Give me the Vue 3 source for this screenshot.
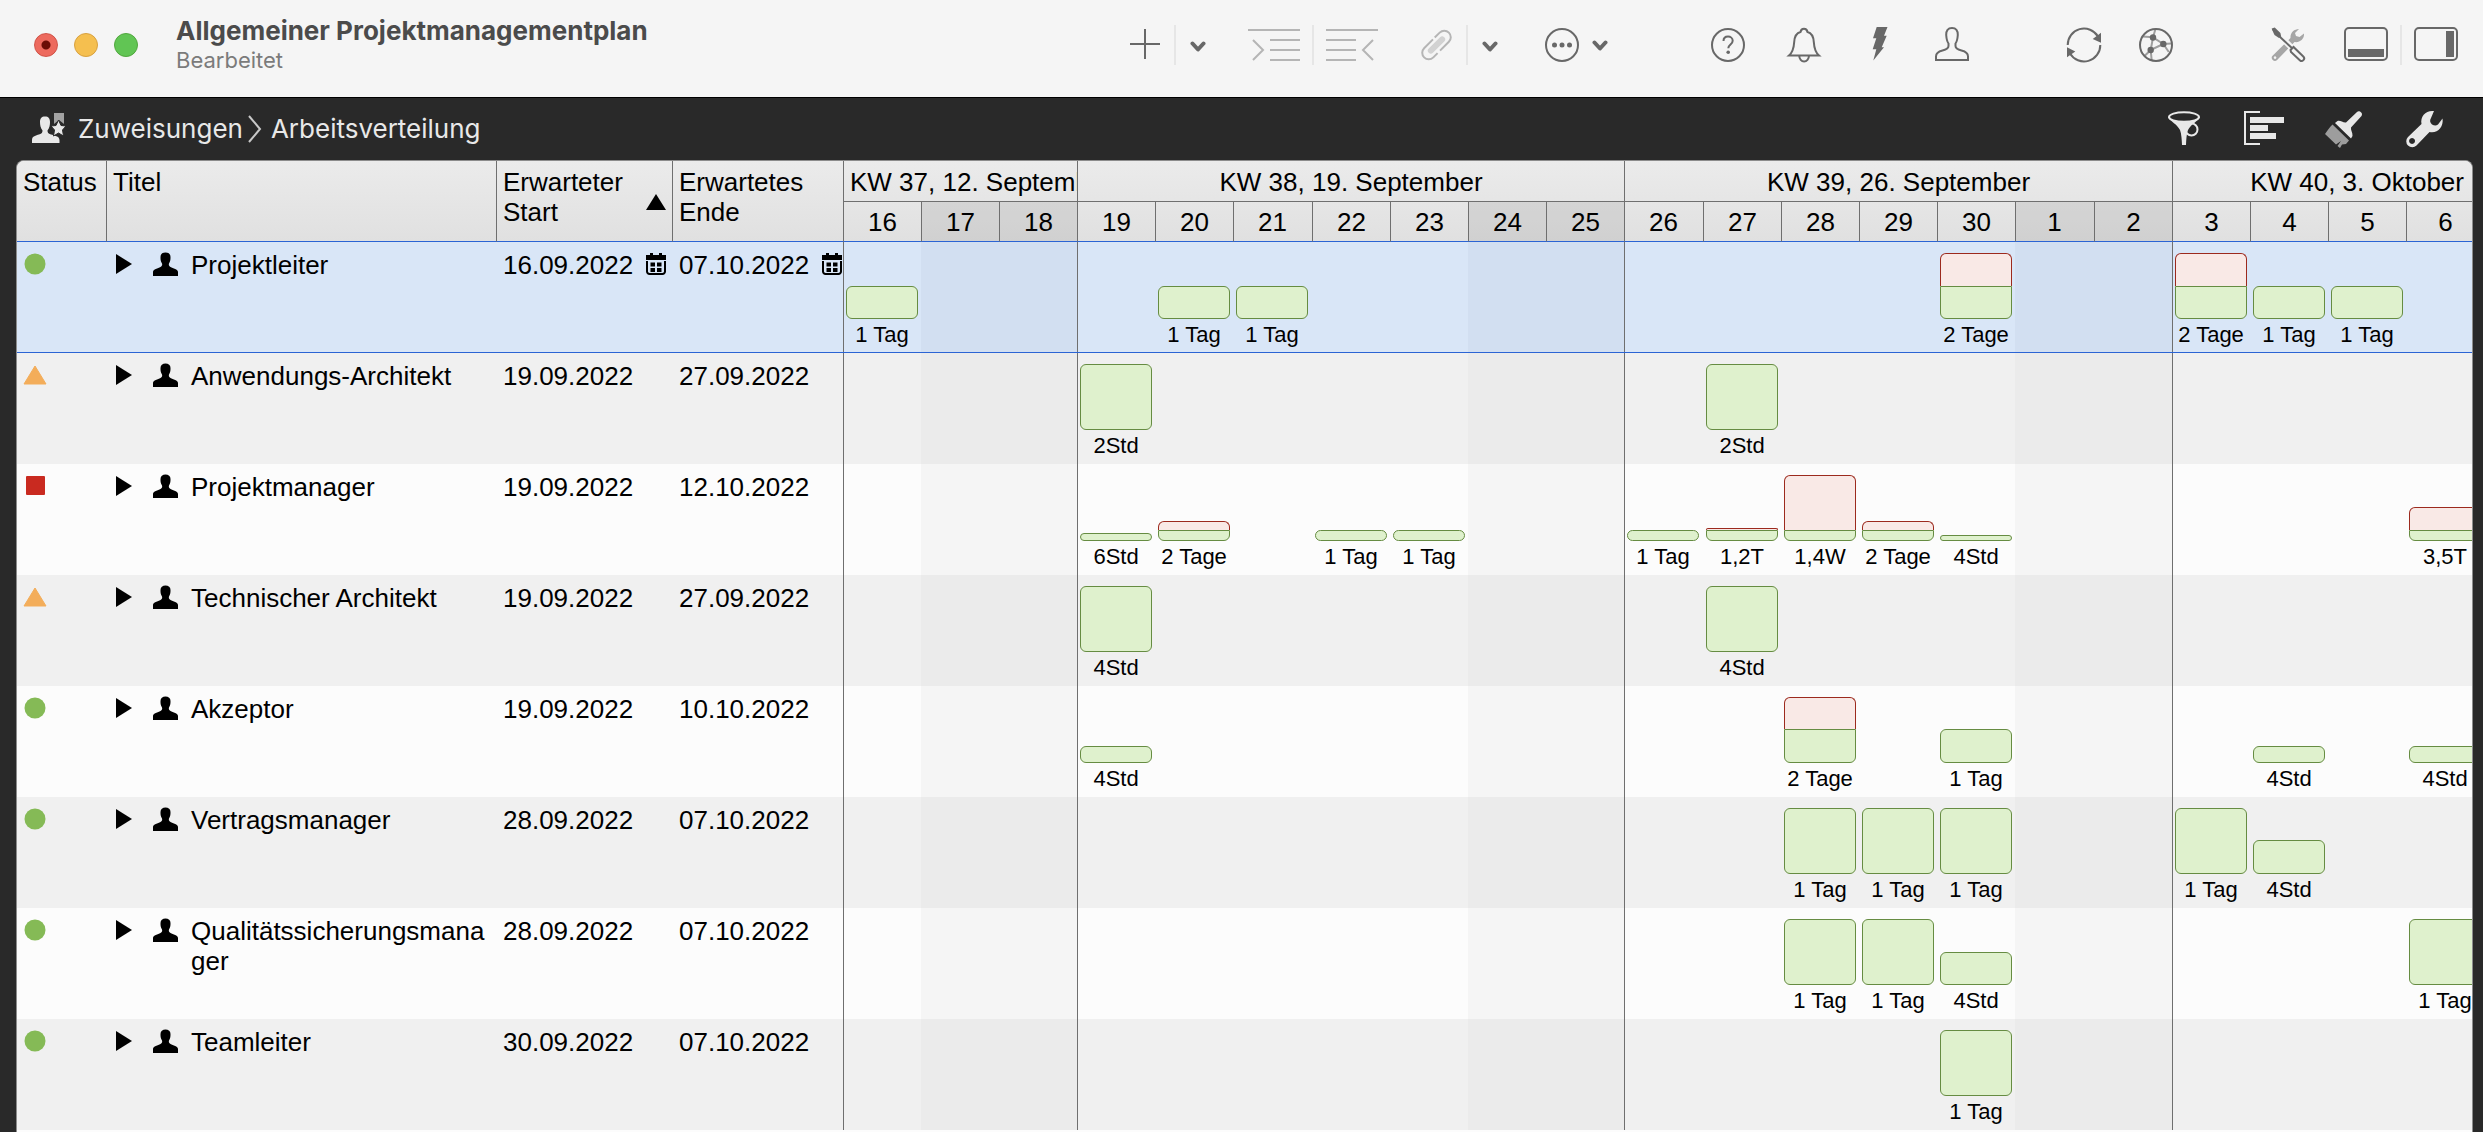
<script setup>
const days = [
  { n: 16, w: 78, week: true },
  { n: 17, w: 78, off: true },
  { n: 18, w: 78, off: true },
  { n: 19, w: 78, week: true },
  { n: 20, w: 78 },
  { n: 21, w: 79 },
  { n: 22, w: 78 },
  { n: 23, w: 78 },
  { n: 24, w: 78, off: true },
  { n: 25, w: 78, off: true },
  { n: 26, w: 79, week: true },
  { n: 27, w: 78 },
  { n: 28, w: 78 },
  { n: 29, w: 78 },
  { n: 30, w: 78 },
  { n: 1, w: 79, off: true },
  { n: 2, w: 78, off: true },
  { n: 3, w: 78, week: true },
  { n: 4, w: 78 },
  { n: 5, w: 78 },
  { n: 6 }
]

const weeks = [
  { label: 'KW 37, 12. September', span: 3, align: 'start' },
  { label: 'KW 38, 19. September', span: 7, align: 'middle' },
  { label: 'KW 39, 26. September', span: 7, align: 'middle' },
  { label: 'KW 40, 3. Oktober', span: 4, align: 'end' }
]

// Each load entry: label, height of the regular part, height of the overload part
const rows = [
  {
    title: 'Projektleiter', status: 'ok', start: '16.09.2022', end: '07.10.2022', fixed: true, selected: true,
    load: {
      16: ['1 Tag', 33], 20: ['1 Tag', 33], 21: ['1 Tag', 33], 30: ['2 Tage', 33, 33],
      3: ['2 Tage', 33, 33], 4: ['1 Tag', 33], 5: ['1 Tag', 33]
    }
  },
  {
    title: 'Anwendungs-Architekt', status: 'warn', start: '19.09.2022', end: '27.09.2022',
    load: { 19: ['2Std', 66], 27: ['2Std', 66] }
  },
  {
    title: 'Projektmanager', status: 'late', start: '19.09.2022', end: '12.10.2022',
    load: {
      19: ['6Std', 8], 20: ['2 Tage', 11, 9], 22: ['1 Tag', 11], 23: ['1 Tag', 11], 26: ['1 Tag', 11],
      27: ['1,2T', 11, 2], 28: ['1,4W', 11, 55], 29: ['2 Tage', 11, 9], 30: ['4Std', 6], 6: ['3,5T', 11, 23]
    }
  },
  {
    title: 'Technischer Architekt', status: 'warn', start: '19.09.2022', end: '27.09.2022',
    load: { 19: ['4Std', 66], 27: ['4Std', 66] }
  },
  {
    title: 'Akzeptor', status: 'ok', start: '19.09.2022', end: '10.10.2022',
    load: { 19: ['4Std', 17], 28: ['2 Tage', 34, 32], 30: ['1 Tag', 34], 4: ['4Std', 17], 6: ['4Std', 17] }
  },
  {
    title: 'Vertragsmanager', status: 'ok', start: '28.09.2022', end: '07.10.2022',
    load: { 28: ['1 Tag', 66], 29: ['1 Tag', 66], 30: ['1 Tag', 66], 3: ['1 Tag', 66], 4: ['4Std', 34] }
  },
  {
    title: 'Qualitätssicherungsmanager', status: 'ok', start: '28.09.2022', end: '07.10.2022',
    load: { 28: ['1 Tag', 66], 29: ['1 Tag', 66], 30: ['4Std', 33], 6: ['1 Tag', 66] }
  },
  {
    title: 'Teamleiter', status: 'ok', start: '30.09.2022', end: '07.10.2022',
    load: { 30: ['1 Tag', 66] }
  }
]
</script>

<template>
  <div class="window">
    <header class="toolbar">
      <div class="lights">
        <button class="light close" aria-label="Schließen"></button>
        <button class="light minimize" aria-label="Minimieren"></button>
        <button class="light maximize" aria-label="Maximieren"></button>
      </div>
      <div class="doc">
        <h1>Allgemeiner Projektmanagementplan</h1>
        <p>Bearbeitet</p>
      </div>

      <div class="group">
        <button class="tool" aria-label="Hinzufügen">
          <svg width="44" height="44"><path d="M7 21h30M22 6v30" class="ln" transform="translate(1 0)" /></svg>
        </button>
        <i class="sep"></i>
        <button class="chev after-sep" aria-label="Hinzufügen: Optionen">
          <svg width="16" height="44"><path d="M2.500 20.500l5.500 6 5.500-6" class="bold" /></svg>
        </button>
      </div>

      <div class="group g-indent">
        <button class="tool wide faint" aria-label="Einrücken">
          <svg width="52" height="44"><path d="M0 7h52M22 17h30M22 27h30M22 37h30M5 17l10 10L5 37" class="ln" /></svg>
        </button>
        <i class="sep mid"></i>
        <button class="tool wide faint" aria-label="Ausrücken">
          <svg width="52" height="44"><path d="M0 7h52M0 17h30M0 27h30M0 37h30M47 17L37 27l10 10" class="ln" /></svg>
        </button>
      </div>

      <div class="group g-link">
        <button class="tool faint" aria-label="Verknüpfen">
          <svg width="44" height="44">
            <g transform="rotate(45 22.500 22)" class="ln">
              <path d="M16 18V11a6.500 6.500 0 0 1 13 0v12.500M29 27v6a6.500 6.500 0 0 1-13 0V20.500" />
              <path d="M22.500 14v16" class="core" />
            </g>
          </svg>
        </button>
        <i class="sep"></i>
        <button class="chev after-sep" aria-label="Verknüpfen: Optionen">
          <svg width="16" height="44"><path d="M2.500 20.500l5.500 6 5.500-6" class="bold" /></svg>
        </button>
      </div>

      <div class="group g-more">
        <button class="tool" aria-label="Mehr">
          <svg width="44" height="44">
            <circle cx="22" cy="22" r="16" class="ln" />
            <g class="solid"><circle cx="14.500" cy="22" r="2.500" /><circle cx="22" cy="22" r="2.500" /><circle cx="29.500" cy="22" r="2.500" /></g>
          </svg>
        </button>
        <button class="chev after-tool" aria-label="Mehr: Optionen">
          <svg width="16" height="44"><path d="M2.500 19.500l5.500 6 5.500-6" class="bold" /></svg>
        </button>
      </div>

      <div class="group g-info">
        <button class="tool" aria-label="Hilfe">
          <svg width="44" height="44">
            <circle cx="22" cy="22" r="16" class="ln" />
            <path d="M17.500 18c0-3 2-4.500 4.500-4.500s4.700 1.600 4.700 4.300c0 3.700-4.400 3.700-4.400 7.400" class="ln" />
            <circle cx="22.200" cy="29.200" r="1.800" class="solid" />
          </svg>
        </button>
        <button class="tool" aria-label="Mitteilungen">
          <svg width="44" height="44">
            <path d="M7 32.500h30c-3.500-3-4.800-7-5.200-13.500C31.400 12.500 29.500 10 25.500 9c-.700-4.500-6.300-4.500-7 0-4 1-5.900 3.500-6.300 10-.400 6.500-1.700 10.500-5.200 13.500z" class="ln" />
            <path d="M17.300 33a4.800 5.500 0 0 0 9.600 0" class="ln" />
          </svg>
        </button>
        <button class="tool" aria-label="Aktionen">
          <svg width="44" height="44"><path d="M18.700 4h10.800L26 12.700h2.700l-5 11.600H26L15.300 37.500l3-11.200h-3.600l3.600-11H15z" class="solid" /></svg>
        </button>
        <button class="tool near" aria-label="Benutzer">
          <svg width="44" height="44"><path d="M6 37v-3.500c0-3.500 2.500-5 6.500-6 4.500-1.200 6-2.500 6-4.500v-2.500c-1.500-2-2-4.500-2.300-8.500C16 7.500 18 5 22 5s6 2.500 5.800 7c-.300 4-.800 6.500-2.300 8.500V23c0 2 1.500 3.300 6 4.500 4 1 6.500 2.500 6.500 6V37z" class="ln" /></svg>
        </button>
      </div>

      <div class="group g-sync">
        <button class="tool" aria-label="Aktualisieren">
          <svg width="44" height="44">
            <path d="M5.700 22A16.300 16.300 0 0 1 36 13.500M38.300 22A16.300 16.300 0 0 1 8 30.500" class="ln" />
            <path d="M39 9.700v10L30.700 16zM5 24.300l8.300 4.200L5 34.300z" class="solid" />
          </svg>
        </button>
        <button class="tool" aria-label="Netzwerk">
          <svg width="44" height="44">
            <path d="M19 14.300l10.300 6.700L16.700 27zM19 14.300L21.500 6M19 14.300L8.500 13.500M29.300 21l8-.500M29.300 21l5.500 8M16.700 27L10.500 33M16.700 27l1 10.500" class="ln pale" />
            <circle cx="22" cy="22" r="16" class="ln" />
            <g class="solid"><circle cx="19" cy="14.500" r="3.200" /><circle cx="29.300" cy="21" r="3.200" /><circle cx="16.700" cy="27" r="3.200" /></g>
          </svg>
        </button>
      </div>

      <div class="group g-view">
        <button class="tool" aria-label="Werkzeuge">
          <svg width="44" height="44">
            <path fill-rule="evenodd" d="M33 6c-5 0-9 4-8.500 9L6.800 32.500a3 3 0 0 0 4.300 4.500L28.500 19c5 1 10-3 9.500-8.500l-4.500 3.500-3.500-1-1-3z M9 33.300a1.300 1.300 0 1 0 .1 0z" class="solid tint" />
            <path d="M10 9L27 26" class="halo" />
            <path d="M6 6.500l2.500-.800 5 4.800.8 3.800L27 26" class="ln" />
            <path d="M6 6.500l2.500-.800 5 4.800.8 3.800L13 15l-4.500-3z" class="solid" />
            <path d="M24.500 27l3-3 9.800 9.500a2.500 2.500 0 0 1-3.500 3.700L25 29z" class="ln backed" />
          </svg>
        </button>
        <button class="tool panel-bottom" aria-label="Unterer Bereich">
          <svg width="44" height="44"><rect x="1" y="5" width="42" height="32" rx="4" class="ln" /><path d="M4 26h36v8H4z" class="solid" /></svg>
        </button>
        <i class="sep mid"></i>
        <button class="tool" aria-label="Seitenbereich">
          <svg width="44" height="44"><rect x="1" y="5" width="42" height="32" rx="4" class="ln" /><path d="M32 8h8v26h-8z" class="solid" /></svg>
        </button>
      </div>
    </header>

    <nav class="crumbs">
      <svg width="36" height="36" class="crumb-icon">
        <path d="M2 32v-3c0-4 4-4.500 7-5.500 3-1 3.500-2 3.500-4C10.500 17 10 14 10 11c0-3.500 1.500-5.500 5-5.500s5 2 5 5.500c0 3-.500 6-2.500 8.500 0 2 .500 3 3.500 4s8.500 1.500 8.500 5.500v3z" fill="#e8e8e8" />
        <path d="M24 2h10v11l-5-4-5 4z" fill="#a2a2a2" />
        <path d="M28.500 9l2.500 5.500 5 .500-3.500 4 1 6-5-3-5 3 1-6-3.500-4 5-.500z" fill="#e8e8e8" stroke="#292929" />
      </svg>
      <a href="#zuweisungen">Zuweisungen</a>
      <svg width="16" height="30" class="crumb-sep"><path d="M2 2l11 13L2 28" fill="none" stroke="#c8c8c8" stroke-width="2" /></svg>
      <a href="#arbeitsverteilung">Arbeitsverteilung</a>
      <div class="crumb-tools">
        <button class="tool" aria-label="Filter">
          <svg width="44" height="44">
            <circle cx="29.500" cy="22.500" r="6" class="hollow" />
            <path d="M6 10c3 5 9 7 12 13 1.500 4 1.800 10 2 15h4c.2-5 .5-11 2-15 3-6 9-8 12-13z" class="light-fill" />
            <ellipse cx="22" cy="10" rx="15" ry="4.800" class="hollow dark" />
          </svg>
        </button>
        <button class="tool" aria-label="Gruppierung">
          <svg width="44" height="44"><path d="M18 5H3v32h15" class="hollow" /><path d="M8 10h34v6H8zM8 18h18v6H8zM8 26h26v6H8z" class="light-fill" /></svg>
        </button>
        <button class="tool" aria-label="Stil">
          <svg width="44" height="44">
            <path d="M38 4.500c2 1 2.500 3 1.500 4.500L29 20.500c-.5 3 1.800 5 1.500 8.500l-1.500 2.500L13 16l2.500-2c3-.8 5.500 2 8.500 1.500L35 5c1-1 2-1 3-.5z" class="light-fill" />
            <path d="M10.500 17.500L27 33.500l-3 3.500-4 .5-2 3.500-2.500-2L19 34l-5 3.500L3 27c2-3 4.500-6.500 7.500-9.500z" fill="#9d9d9d" />
          </svg>
        </button>
        <button class="tool" aria-label="Einstellungen">
          <svg width="44" height="44"><path fill-rule="evenodd" d="M32 4C24 3 18 9 19.500 17L6 30a5.800 5.800 0 0 0 8.500 8.500L27.500 25C35 27 42 20 40.500 11.500L36 17.500c-2 1.500-4 1-6 0-2-2-2.500-4-1-6.500zM10 31a3 3 0 1 0 .1 0z" class="light-fill" /></svg>
        </button>
      </div>
    </nav>

    <main class="panel">
      <table>
        <colgroup>
          <col class="c-status" />
          <col class="c-title" />
          <col class="c-start" />
          <col class="c-end" />
          <col v-for="d in days" :key="d.n" :style="d.w ? { width: d.w + 'px' } : null" />
        </colgroup>
        <thead>
          <tr class="weeks">
            <th rowspan="2" scope="col">Status</th>
            <th rowspan="2" scope="col">Titel</th>
            <th rowspan="2" scope="col" aria-sort="ascending">
              <button class="sort">
                <span>Erwarteter<br />Start</span>
                <svg width="20" height="16"><path d="M10 0l10 16H0z" /></svg>
              </button>
            </th>
            <th rowspan="2" scope="col">Erwartetes<br />Ende</th>
            <th v-for="w in weeks" :key="w.label" :colspan="w.span" scope="colgroup" class="week" :class="w.align">{{ w.label }}</th>
          </tr>
          <tr class="days">
            <th v-for="d in days" :key="d.n" scope="col" :class="{ off: d.off }"><div class="slot">{{ d.n }}</div></th>
          </tr>
        </thead>
        <tbody>
          <tr v-for="r in rows" :key="r.title" :class="{ selected: r.selected }">
            <td>
              <svg class="status" width="24" height="24" role="img" :aria-label="r.status">
                <circle v-if="r.status === 'ok'" cx="12" cy="12" r="10.500" fill="#85ba56" />
                <path v-else-if="r.status === 'warn'" d="M12 3l11 18H1z" fill="#f3ad5a" stroke="#f3ad5a" stroke-linejoin="round" />
                <rect v-else x="3" y="2" width="19" height="19" rx="1" fill="#c92a20" />
              </svg>
            </td>
            <td>
              <div class="name">
                <button class="expand" aria-label="Aufklappen"><svg width="16" height="22"><path d="M0 1l16 10L0 21z" /></svg></button>
                <svg class="person" width="25" height="24"><path d="M0 24v-4c0-3 5-3.500 7.500-5 1.500-1 2-2 1.500-3.500C7.500 9 7.500 7.500 7.500 5 7.500 2 9.500.5 12.500.5s5 1.500 5 4.500c0 2.500 0 4-1.500 6.500-.5 1.500 0 2.500 1.500 3.500 2.500 1.500 7.500 2 7.500 5v4z" /></svg>
                <span class="label">{{ r.title }}</span>
              </div>
            </td>
            <td v-for="(date, i) in [r.start, r.end]" :key="i">
              <div class="date">
                <span>{{ date }}</span>
                <svg v-if="r.fixed" width="20" height="22">
                  <path d="M4 0h3v2h6V0h3v2h4v5H0V2h4z" />
                  <path d="M1 8v10.500A2.500 2.500 0 0 0 3.500 21h13a2.500 2.500 0 0 0 2.500-2.500V8" fill="none" stroke="#000" stroke-width="2" />
                  <path d="M4.500 9.500h4.500v4H4.500zM11 9.500h4.500v4H11zM4.500 15h4.500v4H4.500zM11 15h4.500v4H11z" />
                </svg>
              </div>
            </td>
            <td v-for="d in days" :key="d.n" class="day" :class="{ off: d.off, week: d.week }">
              <div v-if="r.load[d.n]" class="slot">
                <div class="bar">
                  <div v-if="r.load[d.n][2]" class="over" :style="{ height: r.load[d.n][2] + 'px' }"></div>
                  <div class="work" :style="{ height: r.load[d.n][1] + 'px' }"></div>
                </div>
                <div class="amount">{{ r.load[d.n][0] }}</div>
              </div>
            </td>
          </tr>
        </tbody>
      </table>
    </main>
  </div>
</template>

<style>
body {
  margin: 0;
  background: #292929;
}
</style>

<style scoped>
.window {
  display: flex;
  flex-direction: column;
  min-height: 100vh;
  overflow: hidden;
  background: #292929;
  font-family: "Liberation Sans", Arial, sans-serif;
  font-size: 26px;
  line-height: 30px;
  color: #000;
}
button {
  border: 0;
  padding: 0;
  background: none;
  color: inherit;
  font: inherit;
  text-align: left;
}
svg {
  display: block;
  flex: none;
}

/* Title bar */
.toolbar {
  display: flex;
  align-items: center;
  height: 90px;
  padding: 0 25px 7px 34px;
  border-bottom: 1px solid #000;
  background: #f5f5f5;
  color: #686868;
}
.lights {
  display: flex;
  gap: 16px;
}
.light {
  width: 24px;
  height: 24px;
  border-radius: 50%;
  border: 1px solid #d8a140;
  background: #f5bf4f;
}
.light.close {
  border-color: #d05247;
  background: radial-gradient(circle, #6b0d06 4px, #ed6a5e 5px);
}
.light.maximize {
  border-color: #51a73e;
  background: #61c554;
}
.doc {
  flex: 1;
  min-width: 0;
  margin-left: 38px;
  font-family: Inter, "Noto Sans", sans-serif;
  white-space: nowrap;
}
.doc h1 {
  margin: 0;
  font-size: 26px;
  line-height: 30px;
  font-weight: 700;
  color: #4b4b4b;
}
.doc p {
  margin: 0;
  font-size: 22px;
  line-height: 28px;
  color: #7b7b7b;
}
.group {
  display: flex;
  align-items: center;
}
.tool {
  width: 44px;
  height: 44px;
}
.tool.wide {
  width: 52px;
}
.tool.faint {
  color: #b5b5b5;
}
.chev {
  width: 16px;
}
.sep {
  width: 2px;
  height: 40px;
  margin-left: 8px;
  background: #e6e6e6;
}
.sep.mid {
  margin: 0 12px;
}
.after-sep {
  margin-left: 14px;
}
.after-tool {
  margin-left: 8px;
}
.g-indent,
.g-more {
  margin-left: 42px;
}
.g-link {
  margin-left: 36px;
}
.g-info {
  gap: 32px;
  margin-left: 98px;
}
.g-sync,
.g-view {
  margin-left: 88px;
}
.g-sync {
  gap: 28px;
}
.g-info .near {
  margin-left: -4px;
}
.panel-bottom {
  margin-left: 34px;
}
.ln {
  fill: none;
  stroke: currentColor;
  stroke-width: 2;
}
.core {
  stroke: #d2d2d2;
  stroke-width: 6;
  stroke-linecap: round;
}
.pale {
  stroke: #9e9e9e;
}
.bold {
  fill: none;
  stroke: currentColor;
  stroke-width: 4;
  stroke-linecap: round;
  stroke-linejoin: round;
}
.solid {
  fill: currentColor;
}
.tint {
  fill: #a6a6a6;
}
.halo {
  stroke: #f5f5f5;
  stroke-width: 6;
}
.backed {
  fill: #f5f5f5;
}

/* Breadcrumb bar */
.crumbs {
  display: flex;
  align-items: center;
  height: 62px;
  padding: 0 37px 0 30px;
  font-family: Inter, "Noto Sans", sans-serif;
  color: #e8e8e8;
}
.crumbs a {
  color: inherit;
  text-decoration: none;
}
.crumb-icon {
  margin-right: 12px;
}
.crumb-sep {
  margin: 0 8px 0 4px;
}
.crumb-tools {
  display: flex;
  gap: 36px;
  margin-left: auto;
}
.hollow {
  fill: none;
  stroke: #e8e8e8;
  stroke-width: 2;
}
.hollow.dark {
  fill: #292929;
}
.light-fill {
  fill: #e8e8e8;
}

/* Workload table */
.panel {
  flex: 1;
  margin: 0 10px 0 16px;
  border: 1px solid #8c8c8c;
  border-bottom: 0;
  border-radius: 8px 8px 0 0;
  overflow: hidden;
  background: #fcfcfc;
}
table {
  width: 100%;
  table-layout: fixed;
  border-spacing: 0;
}
.c-status {
  width: 89px;
}
.c-title {
  width: 390px;
}
.c-start {
  width: 176px;
}
.c-end {
  width: 171px;
}
th,
td {
  box-sizing: border-box;
  padding: 0;
  text-align: left;
  vertical-align: top;
  font-weight: 400;
}
thead {
  background: linear-gradient(#ebebeb, #e0e0e0);
}
th {
  padding: 6px 0 0 6px;
  border-left: 1px solid #6f6f6f;
  border-bottom: 1px solid #2b64d4;
}
.weeks th:first-child {
  border-left: 0;
}
.weeks .week {
  height: 41px;
  border-bottom-color: #6f6f6f;
  overflow: hidden;
  white-space: nowrap;
}
.week.middle {
  padding-left: 0;
  text-align: center;
}
.week.end {
  padding-right: 8px;
  text-align: right;
}
.days th {
  height: 40px;
  padding: 5px 0 0;
  overflow: hidden;
}
.days .slot {
  width: 77px;
  text-align: center;
}
.days .off {
  background: rgba(0, 0, 0, 0.07);
}
.sort {
  display: flex;
  gap: 23px;
  width: 100%;
}
.sort svg {
  margin-top: 27px;
}
.sort span {
  width: 120px;
}
td {
  height: 111px;
  background: #fcfcfc;
}
tbody tr:nth-child(even) td {
  background: #f0f0f0;
}
tbody td.off {
  background: #f5f5f5;
}
tbody tr:nth-child(even) td.off {
  background: #ebebeb;
}
tbody .selected td {
  border-bottom: 1px solid #2b64d4;
  background: #d9e6f7;
}
tbody .selected td.off {
  background: #d2dff1;
}
.status {
  margin: 10px 0 0 6px;
}
.name {
  display: flex;
  align-items: flex-start;
  padding: 8px 5px 0 10px;
}
.expand {
  margin-top: 3px;
}
.person {
  margin: 2px 13px 0 21px;
}
.label {
  flex: 1;
  min-width: 0;
  overflow-wrap: anywhere;
}
.date {
  display: flex;
  gap: 13px;
  padding: 8px 0 0 7px;
}
.date svg {
  margin-top: 3px;
}
.day {
  overflow: hidden;
}
.day.week {
  box-shadow: inset 1px 0 #6f6f6f;
}
.day .slot {
  width: 78px;
}
.bar {
  box-sizing: border-box;
  display: flex;
  flex-direction: column;
  justify-content: flex-end;
  width: 75px;
  height: 77px;
  padding-left: 3px;
}
.work,
.over {
  box-sizing: border-box;
  border: 1px solid #668c42;
  border-radius: 6px;
  background: #dff1cd;
}
.over {
  border-color: #9c2a1e;
  border-bottom: 0;
  border-radius: 6px 6px 0 0;
  background: #f9e9e6;
}
.over + .work {
  border-radius: 0 0 6px 6px;
}
.amount {
  margin-top: 4px;
  font-size: 22px;
  line-height: 24px;
  text-align: center;
  white-space: nowrap;
}
</style>
